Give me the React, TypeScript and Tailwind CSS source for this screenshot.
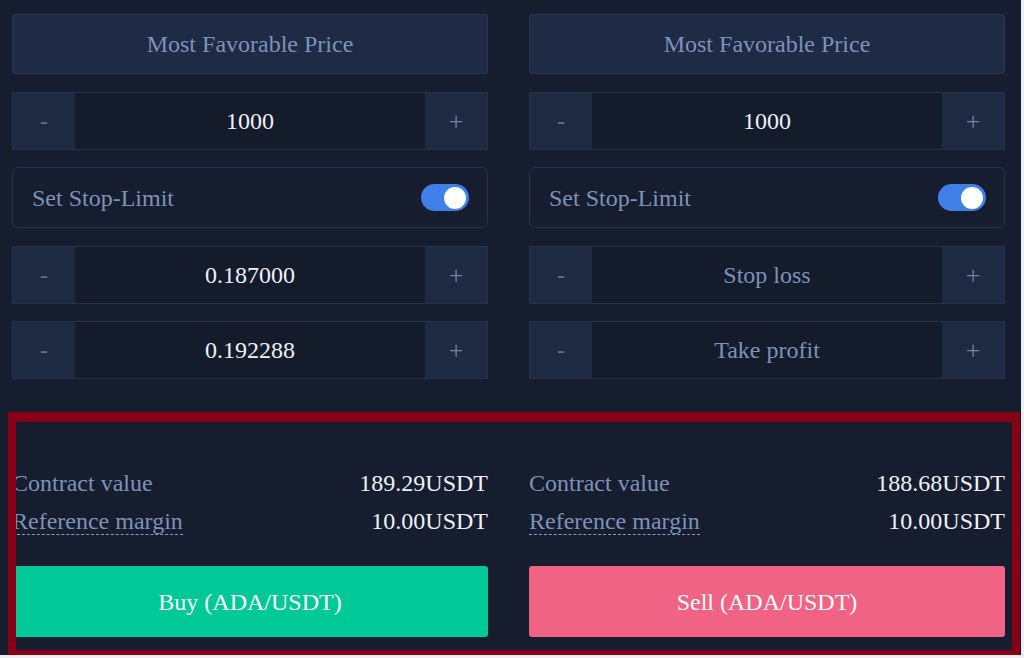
import React from "react";

type Side = {
  amount: string;
  stop: string;
  take: string;
  placeholder: boolean;
  contract: string;
  margin: string;
  action: string;
  color: string;
};

const sides: Side[] = [
  {
    amount: "1000",
    stop: "0.187000",
    take: "0.192288",
    placeholder: false,
    contract: "189.29USDT",
    margin: "10.00USDT",
    action: "Buy (ADA/USDT)",
    color: "bg-[#00c896]",
  },
  {
    amount: "1000",
    stop: "Stop loss",
    take: "Take profit",
    placeholder: true,
    contract: "188.68USDT",
    margin: "10.00USDT",
    action: "Sell (ADA/USDT)",
    color: "bg-[#f16384]",
  },
];

function Stepper({ value, muted }: { value: string; muted?: boolean }) {
  return (
    <div className="flex h-[58px] border border-[#25324d] bg-[#1e2942]">
      <div className="w-[62px] flex items-center justify-center text-[#5f7396] text-[24px]">-</div>
      <div
        className={`flex-1 flex items-center justify-center bg-[#141b2b] ${
          muted ? "text-[#7d92b8]" : "text-[#eef1f7]"
        }`}
      >
        {value}
      </div>
      <div className="w-[62px] flex items-center justify-center text-[#6f83a6] text-[26px]">+</div>
    </div>
  );
}

function OrderColumn({ side }: { side: Side }) {
  return (
    <div className="w-[476px] flex flex-col">
      {/* Price type */}
      <div className="mt-[14px] h-[60px] flex items-center justify-center rounded-[3px] border border-[#293756] bg-[#1f2a45] text-[#7d92b8]">
        Most Favorable Price
      </div>

      <div className="mt-[18px]">
        <Stepper value={side.amount} />
      </div>

      {/* Stop-limit toggle */}
      <div className="mt-[17px] h-[61px] flex items-center justify-between rounded-[6px] border border-[#25324d] pl-[19px] pr-[18px] text-[#7d92b8]">
        <span>Set Stop-Limit</span>
        <div className="w-[48px] h-[27px] rounded-full bg-[#3f7fe8] flex items-center justify-end pr-[3px]">
          <div className="w-[22px] h-[22px] rounded-full bg-white" />
        </div>
      </div>

      <div className="mt-[18px]">
        <Stepper value={side.stop} muted={side.placeholder} />
      </div>
      <div className="mt-[17px]">
        <Stepper value={side.take} muted={side.placeholder} />
      </div>

      {/* Summary */}
      <div className="mt-[85px] flex flex-col">
        <div className="h-[38px] flex items-center justify-between">
          <span className="text-[#7d92b8]">Contract value</span>
          <span className="text-[#eef1f7]">{side.contract}</span>
        </div>
        <div className="h-[38px] flex items-center justify-between">
          <span className="text-[#7d92b8] border-b border-dashed border-[#8a9bb8] leading-[26px]">Reference margin</span>
          <span className="text-[#eef1f7]">{side.margin}</span>
        </div>
      </div>

      <button className={`mt-[26px] h-[71px] rounded-[3px] text-[#fbfdfc] font-['Liberation_Serif','Times_New_Roman',serif] ${side.color}`}>
        {side.action}
      </button>
    </div>
  );
}

export default function App() {
  return (
    <div className="w-[1024px] h-[658px] bg-[#eceef2] overflow-hidden">
      <div className="relative w-[1021px] h-[655px] overflow-hidden bg-[#161d2e] text-[24px] font-['Liberation_Serif','Times_New_Roman',serif]">
        <div className="flex gap-[41px] pl-[12px]">
          {sides.map((s) => (
            <OrderColumn key={s.action} side={s} />
          ))}
        </div>

        {/* Highlight frame */}
        <div className="absolute left-[8px] top-[412px] w-[1012px] h-[246px] border-[8px] border-t-[10px] border-[#860016] pointer-events-none" />
      </div>
    </div>
  );
}
